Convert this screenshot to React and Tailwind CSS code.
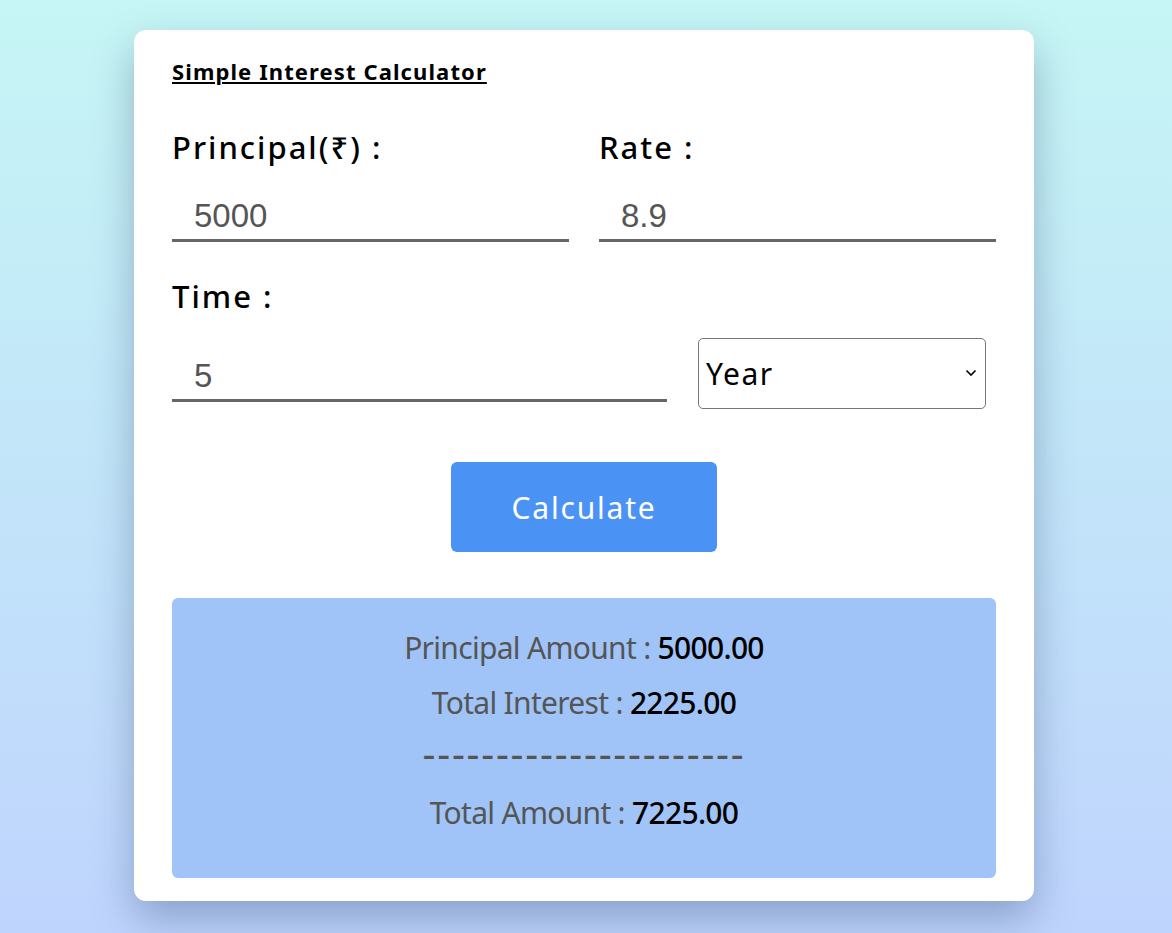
import React, { useState } from 'react';

export default function App() {
  const [principal, setPrincipal] = useState('5000');
  const [rate, setRate] = useState('8.9');
  const [time, setTime] = useState('5');
  const [unit, setUnit] = useState('Year');

  return (
    <div className="min-h-[933px] w-full bg-gradient-to-b from-[#c6f6f5] to-[#bfd4fd] pt-[30px] pb-[31px] font-['Noto_Sans',sans-serif]">
      <div className="ml-[134px] w-[900px] rounded-[12px] bg-white px-[38px] pt-[26px] pb-[23px] shadow-[0_18px_40px_rgba(40,70,110,0.35)]">
        <h1 className="text-[22px] leading-[30px] font-bold text-black underline underline-offset-[2px] decoration-[2px] tracking-[1.1px]">
          Simple Interest Calculator
        </h1>

        <div className="mt-[39px] grid grid-cols-2 gap-x-[30px]">
          <div>
            <label className="block text-[31px] leading-[45px] font-medium tracking-[2px] text-black">Principal(₹) :</label>
            <input
              value={principal}
              onChange={(e) => setPrincipal(e.target.value)}
              className="mt-[22px] h-[50px] w-full border-b-[3px] border-[#666] bg-transparent pl-[22px] text-[33px] text-[#555] outline-none font-['Liberation_Sans',Arial,sans-serif]"
            />
          </div>
          <div>
            <label className="block text-[31px] leading-[45px] font-medium tracking-[2px] text-black">Rate :</label>
            <input
              value={rate}
              onChange={(e) => setRate(e.target.value)}
              className="mt-[22px] h-[50px] w-full border-b-[3px] border-[#666] bg-transparent pl-[22px] text-[33px] text-[#555] outline-none font-['Liberation_Sans',Arial,sans-serif]"
            />
          </div>
        </div>

        <label className="mt-[32px] block text-[31px] leading-[45px] font-medium tracking-[2px] text-black">Time :</label>
        <div className="mt-[19px] flex items-start gap-[31px]">
          <input
            value={time}
            onChange={(e) => setTime(e.target.value)}
            className="mt-[14px] h-[50px] w-[495px] border-b-[3px] border-[#666] bg-transparent pl-[22px] text-[33px] text-[#555] outline-none font-['Liberation_Sans',Arial,sans-serif]"
          />
          <div className="relative h-[71px] w-[288px]">
            <select
              value={unit}
              onChange={(e) => setUnit(e.target.value)}
              className="h-full w-full appearance-none rounded-[5px] border border-[#767676] bg-white pl-[7px] text-[30px] tracking-[1.5px] text-black outline-none"
            >
              <option>Year</option>
              <option>Month</option>
              <option>Day</option>
            </select>
            <svg className="pointer-events-none absolute right-[9px] top-[31px]" width="12" height="8" viewBox="0 0 12 8" fill="none">
              <path d="M1.5 1.5 6 6l4.5-4.5" stroke="#000" strokeWidth="1.6" />
            </svg>
          </div>
        </div>

        <div className="mt-[53px] flex justify-center">
          <button className="h-[90px] w-[266px] rounded-[6px] bg-[#4b92f5] text-[30px] tracking-[1.8px] text-white">
            Calculate
          </button>
        </div>

        <div className="mt-[46px] h-[280px] rounded-[6px] bg-[#a0c4f7] pt-[22px] text-center text-[30px] leading-[55px] tracking-[-0.7px] text-[#555]">
          <p>
            Principal Amount : <span className="font-medium text-black">5000.00</span>
          </p>
          <p>
            Total Interest : <span className="font-medium text-black">2225.00</span>
          </p>
          <p className="-translate-y-[5px] text-[40px] tracking-[1.8px]">----------------------</p>
          <p>
            Total Amount : <span className="font-medium text-black">7225.00</span>
          </p>
        </div>
      </div>
    </div>
  );
}
